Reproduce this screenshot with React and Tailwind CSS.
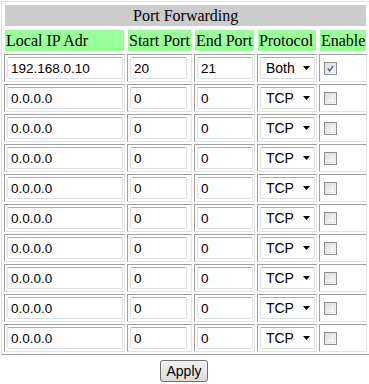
import React, { useState } from 'react';

const initialRows = [
  { ip: '192.168.0.10', start: '20', end: '21', proto: 'Both', enabled: true },
  ...Array.from({ length: 9 }, () => ({ ip: '0.0.0.0', start: '0', end: '0', proto: 'TCP', enabled: false })),
];

const cellBorder = 'border border-t-[#a0a0a0] border-l-[#a0a0a0] border-b-[#e3e3e3] border-r-[#e3e3e3]';
const inputCls =
  'block h-[22px] ml-px px-[3px] rounded-[2px] border border-[#dbdfe6] border-t-[#abadb3] bg-white text-[13.5px] text-black outline-none font-["Liberation_Sans",Arial,sans-serif]';

const Checkbox = ({ checked, onChange }) => (
  <span
    onClick={onChange}
    className="ml-[3px] flex h-[13px] w-[13px] items-center justify-center border border-[#8f8f8f] bg-gradient-to-br from-[#dcdcdc] to-[#fbfbfb] p-px"
  >
    <span className="flex h-full w-full items-center justify-center border border-[#e2e2e2] bg-gradient-to-br from-[#e0e0e0] to-[#fdfdfd]">
      {checked && (
        <svg width="9" height="9" viewBox="0 0 9 9">
          <path d="M1 4.5 L3.5 7.5 L8 1" fill="none" stroke="#3a5ea8" strokeWidth="1.8" />
        </svg>
      )}
    </span>
  </span>
);

const App = () => {
  const [rows, setRows] = useState(initialRows);

  const update = (i, key, value) => {
    setRows(prev => prev.map((r, idx) => (idx === i ? { ...r, [key]: value } : r)));
  };

  return (
    <div className="w-[369px] h-[384px] bg-white pl-px pt-px font-['Liberation_Serif','Times_New_Roman',serif]">
      <table className="border-separate border-spacing-[2px] border border-t-[#e0e0e0] border-l-[#e0e0e0] border-b-[#a0a0a0] border-r-[#a0a0a0]">
        <tbody>
          <tr>
            <td colSpan={5} className="h-[23px] border border-white bg-[#cccccc] p-0 text-center text-[16px] leading-none text-black">
              Port Forwarding
            </td>
          </tr>
          <tr className="text-[16px] leading-none text-black">
            <td className="h-[23px] w-[122px] border border-white bg-[#99ff99] px-px whitespace-nowrap">Local IP Adr</td>
            <td className="w-[66px] border border-white bg-[#99ff99] px-px whitespace-nowrap">Start Port</td>
            <td className="w-[61px] border border-white bg-[#99ff99] px-px whitespace-nowrap">End Port</td>
            <td className="w-[60px] border border-white bg-[#99ff99] px-px whitespace-nowrap">Protocol</td>
            <td className="w-[47px] border border-white bg-[#99ff99] px-px whitespace-nowrap">Enable</td>
          </tr>
          {rows.map((r, i) => (
            <tr key={i}>
              <td className={`h-[28px] p-px ${cellBorder}`}>
                <input className={`${inputCls} w-[116px]`} value={r.ip} onChange={e => update(i, 'ip', e.target.value)} />
              </td>
              <td className={`p-px ${cellBorder}`}>
                <input className={`${inputCls} w-[57px]`} value={r.start} onChange={e => update(i, 'start', e.target.value)} />
              </td>
              <td className={`p-px ${cellBorder}`}>
                <input className={`${inputCls} w-[56px]`} value={r.end} onChange={e => update(i, 'end', e.target.value)} />
              </td>
              <td className={`p-px ${cellBorder}`}>
                <div className="relative ml-px w-[55px]">
                  <select
                    value={r.proto}
                    onChange={e => update(i, 'proto', e.target.value)}
                    className="block h-[22px] w-full appearance-none rounded-[2px] border border-[#dbdfe6] border-t-[#abadb3] bg-white pl-[5px] text-[14px] text-black outline-none font-['Liberation_Sans',Arial,sans-serif]"
                  >
                    <option>Both</option>
                    <option>TCP</option>
                    <option>UDP</option>
                  </select>
                  <svg className="pointer-events-none absolute right-[5px] top-[9px]" width="7" height="4" viewBox="0 0 7 4">
                    <path d="M0 0 H7 L3.5 4 Z" fill="#000" />
                  </svg>
                </div>
              </td>
              <td className={`p-px ${cellBorder}`}>
                <Checkbox checked={r.enabled} onChange={() => update(i, 'enabled', !r.enabled)} />
              </td>
            </tr>
          ))}
        </tbody>
      </table>
      <div className="flex w-[366px] justify-center pt-[5px]">
        <button className="h-[22px] w-[48px] rounded-[3px] border border-[#707070] bg-gradient-to-b from-[#f2f2f2] to-[#dcdcdc] text-[14px] text-black font-['Liberation_Sans',Arial,sans-serif]">
          Apply
        </button>
      </div>
    </div>
  );
};

export default App;
